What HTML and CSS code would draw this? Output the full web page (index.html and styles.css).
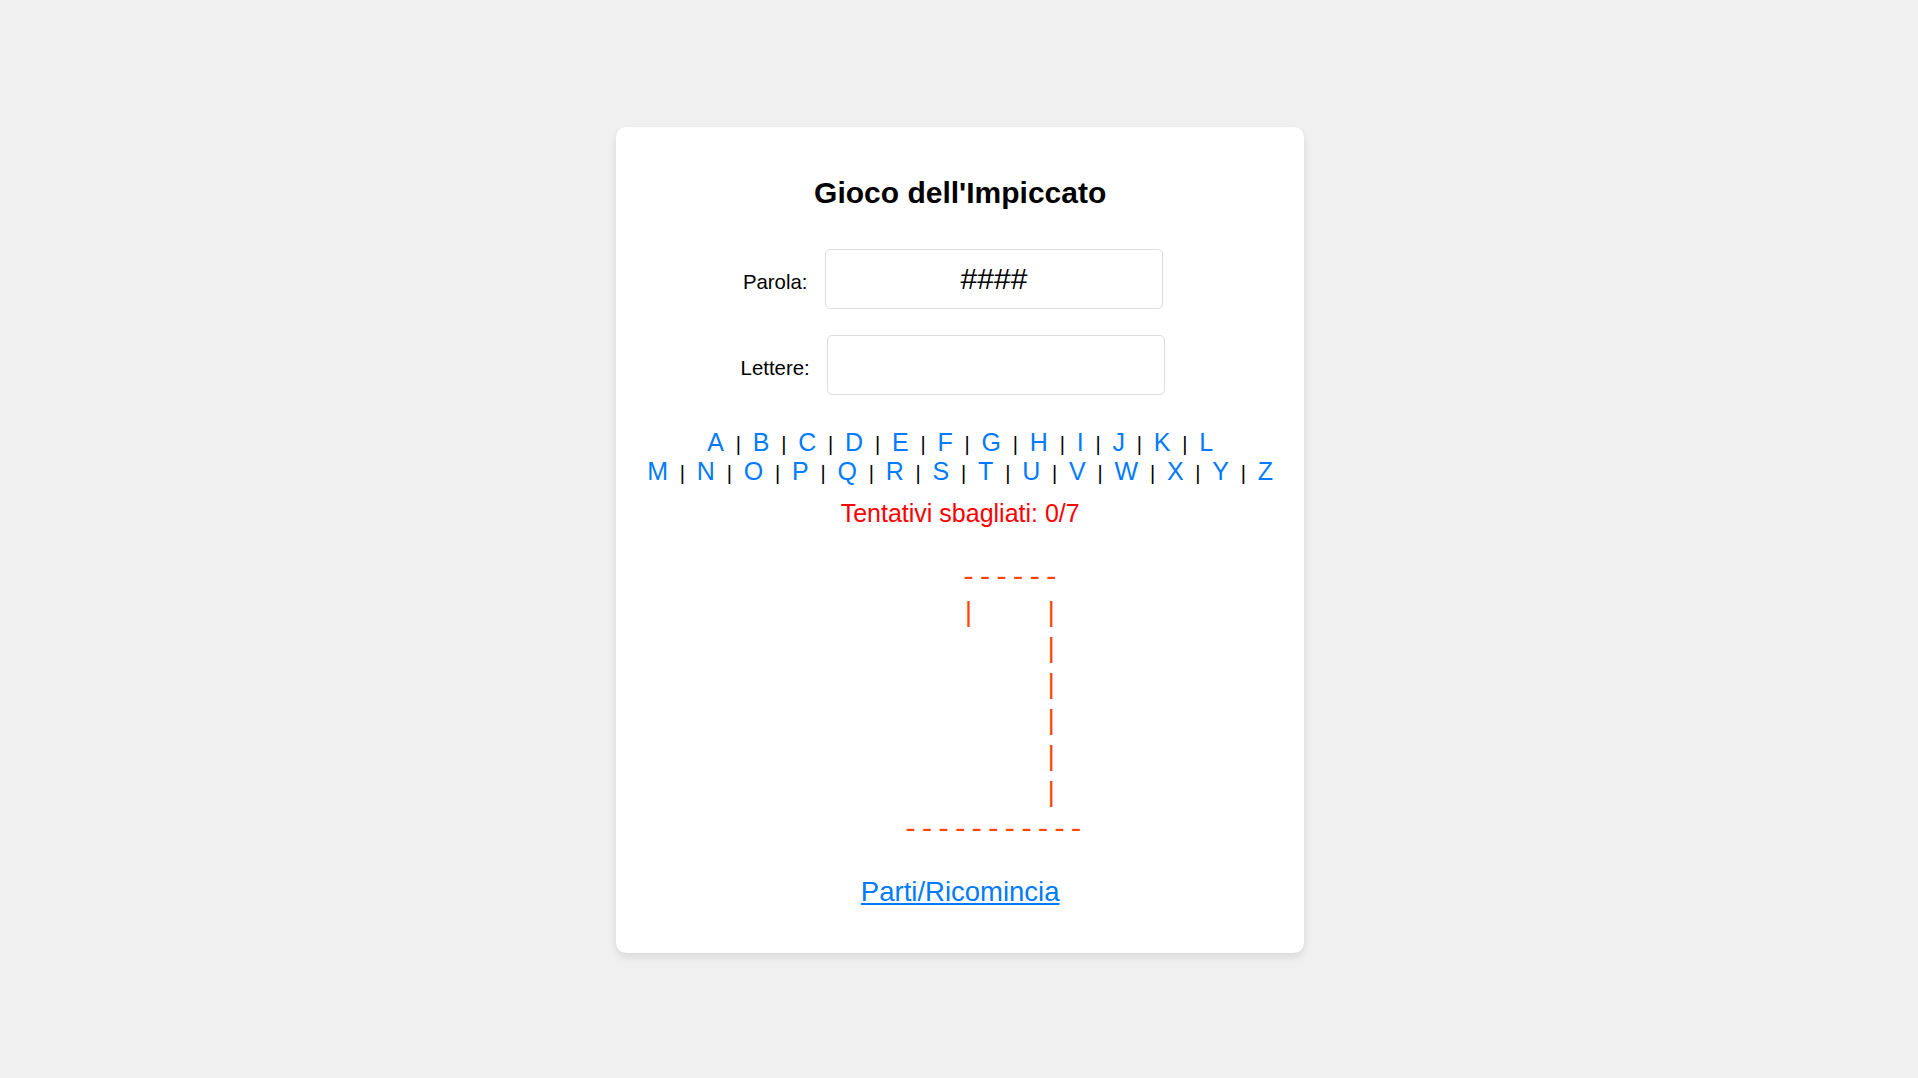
FILE: index.html
```html
<!DOCTYPE html>
<html lang="it">
<head>
<meta charset="utf-8">
<title>Gioco dell'Impiccato</title>
<link rel="stylesheet" href="styles.css">
</head>
<body>
<div class="card">
  <h1 class="title">Gioco dell'Impiccato</h1>
  <div class="field">
    <label class="field-label">Parola:</label>
    <div class="field-box">####</div>
  </div>
  <div class="field">
    <label class="field-label">Lettere:</label>
    <div class="field-box">&nbsp;</div>
  </div>
  <div class="alphabet">
    <div class="alpha-row"><a class="letter" href="#">A</a><span class="sep">|</span><a class="letter" href="#">B</a><span class="sep">|</span><a class="letter" href="#">C</a><span class="sep">|</span><a class="letter" href="#">D</a><span class="sep">|</span><a class="letter" href="#">E</a><span class="sep">|</span><a class="letter" href="#">F</a><span class="sep">|</span><a class="letter" href="#">G</a><span class="sep">|</span><a class="letter" href="#">H</a><span class="sep">|</span><a class="letter" href="#">I</a><span class="sep">|</span><a class="letter" href="#">J</a><span class="sep">|</span><a class="letter" href="#">K</a><span class="sep">|</span><a class="letter" href="#">L</a></div>
    <div class="alpha-row"><a class="letter" href="#">M</a><span class="sep">|</span><a class="letter" href="#">N</a><span class="sep">|</span><a class="letter" href="#">O</a><span class="sep">|</span><a class="letter" href="#">P</a><span class="sep">|</span><a class="letter" href="#">Q</a><span class="sep">|</span><a class="letter" href="#">R</a><span class="sep">|</span><a class="letter" href="#">S</a><span class="sep">|</span><a class="letter" href="#">T</a><span class="sep">|</span><a class="letter" href="#">U</a><span class="sep">|</span><a class="letter" href="#">V</a><span class="sep">|</span><a class="letter" href="#">W</a><span class="sep">|</span><a class="letter" href="#">X</a><span class="sep">|</span><a class="letter" href="#">Y</a><span class="sep">|</span><a class="letter" href="#">Z</a></div>
  </div>
  <div class="errors">Tentativi sbagliati: 0/7</div>
<pre class="gallows">      ------
      |    |
           |
           |
           |
           |
           |
    -----------</pre>
  <div class="restart-wrap"><a class="restart" href="#">Parti/Ricomincia</a></div>
</div>
</body>
</html>
```
FILE: styles.css
```css
html, body {
  margin: 0;
  padding: 0;
}

body {
  background: #f0f0f0;
  font-family: "Liberation Sans", Arial, sans-serif;
  color: #000;
  min-height: 100vh;
  display: flex;
  align-items: center;
  justify-content: center;
}

.card {
  box-sizing: border-box;
  width: 688px;
  margin: 2px 0 0 2.4px;
  padding: 20px 30px;
  background: #fff;
  border-radius: 10px;
  box-shadow: 0 4px 8px rgba(0, 0, 0, 0.1);
  text-align: center;
}

.title {
  font-size: 30px;
  font-weight: bold;
  line-height: normal;
  margin: 29.4px 0 38.4px;
}

.field {
  display: flex;
  justify-content: center;
  align-items: baseline;
  gap: 17.5px;
  margin-bottom: 26px;
}

.field-label {
  font-size: 20.4px;
}

.field-box {
  box-sizing: border-box;
  width: 338px;
  margin-right: 14.5px;
  padding: 12px;
  border: 1px solid #ddd;
  border-radius: 5px;
  font-size: 30px;
  line-height: normal;
  text-align: center;
}

.alphabet {
  margin-top: 33px;
}

.alpha-row {
  font-size: 25px;
  line-height: 29px;
  white-space: nowrap;
}

.letter {
  color: #007bff;
  text-decoration: none;
}

.sep {
  font-size: 20px;
  line-height: 1;
  margin: 0 11.8px;
  color: #000;
}

.errors {
  margin-top: 13px;
  font-size: 25px;
  line-height: normal;
  color: #ff0000;
}

.gallows {
  margin: 32.5px 0 27.6px;
  font-family: "Liberation Mono", "Courier New", monospace;
  font-size: 27.6px;
  line-height: 36px;
  color: #ff4500;
  text-align: center;
}

.restart-wrap {
  margin-bottom: 25px;
  font-size: 27.5px;
  line-height: normal;
}

.restart {
  color: #007bff;
  text-decoration: underline;
}
```
